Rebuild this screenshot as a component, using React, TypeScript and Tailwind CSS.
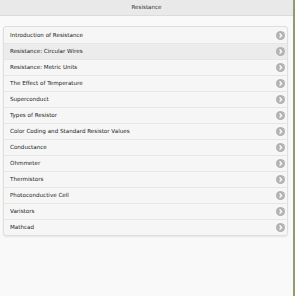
const topics = [
  "Introduction of Resistance",
  "Resistance: Circular Wires",
  "Resistance: Metric Units",
  "The Effect of Temperature",
  "Superconduct",
  "Types of Resistor",
  "Color Coding and Standard Resistor Values",
  "Conductance",
  "Ohmmeter",
  "Thermistors",
  "Photoconductive Cell",
  "Varistors",
  "Mathcad",
];

function ArrowIcon() {
  return (
    <svg width="9" height="9" viewBox="0 0 10 10">
      <circle cx="5" cy="5" r="5" fill="#b3b3b3" />
      <path d="M4 2.8 L6.2 5 L4 7.2" fill="none" stroke="#ffffff" strokeWidth="1.5" />
    </svg>
  );
}

export default function App() {
  return (
    <div className="flex h-[296px] w-[295px] font-['DejaVu_Sans',sans-serif]">
      <div className="flex-1 bg-[#f9f9f9]">
        <div className="flex h-4 items-center justify-center border-b border-[#dcdcdc] bg-[#e9e9e9] text-[5.6px] text-[#333]">
          Resistance
        </div>
        <div className="ml-[3px] mr-[5px] mt-[10px] rounded-[3px] border border-[#dedede] bg-[#f6f6f6] shadow-[0_1px_2px_rgba(0,0,0,0.08)]">
          {topics.map((t, i) => (
            <div
              key={t}
              className={`flex h-4 items-center justify-between pl-[6px] pr-[2px] text-[5.6px] text-[#222] ${
                i > 0 ? "border-t border-[#e6e6e6]" : ""
              } ${i === 1 ? "bg-[#ececec]" : ""}`}
            >
              <span>{t}</span>
              <ArrowIcon />
            </div>
          ))}
        </div>
      </div>
      <div className="w-[2px] bg-[#8c9e6c]" />
    </div>
  );
}
